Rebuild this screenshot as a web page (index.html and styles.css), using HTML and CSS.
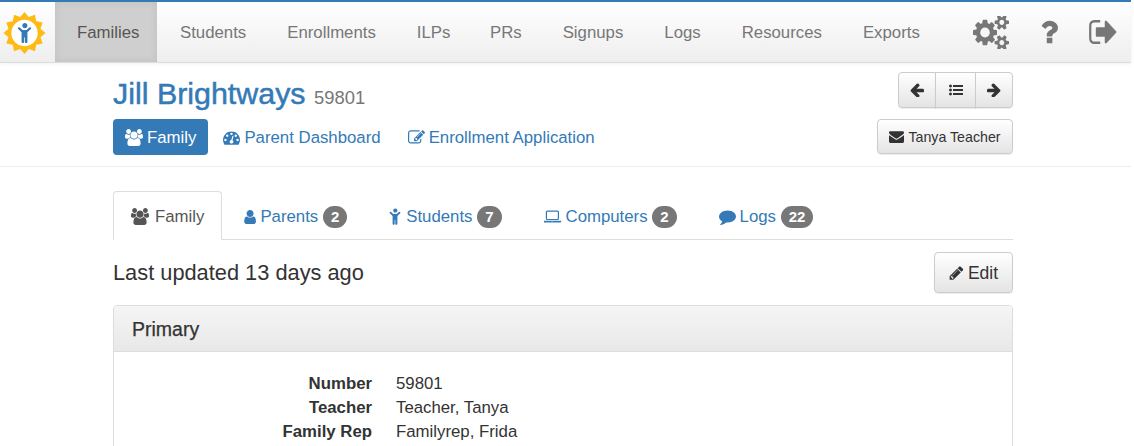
FILE: index.html
```html
<!DOCTYPE html>
<html lang="en">
<head>
<meta charset="utf-8">
<title>Jill Brightways</title>
<link rel="stylesheet" href="styles.css">
</head>
<body>
<svg class="defs" xmlns="http://www.w3.org/2000/svg">
  <symbol id="i-users" viewBox="0 0 1920 1792"><path d="M593 896q-162 5-265 128h-134q-82 0-138-40.500t-56-118.500q0-353 124-353 6 0 43.500 21t97.500 42.500 119 21.500q67 0 133-23-5 37-5 66 0 139 81 256zm1071 637q0 120-73 189.500t-194 69.500h-874q-121 0-194-69.500t-73-189.500q0-53 3.500-103.500t14-109 26.500-108.500 43-97.500 62-81 85.500-53.500 111.500-20q10 0 43 21.500t73 48 107 48 135 21.500 135-21.500 107-48 73-48 43-21.500q61 0 111.500 20t85.500 53.500 62 81 43 97.500 26.500 108.500 14 109 3.500 103.500zm-1024-1277q0 106-75 181t-181 75-181-75-75-181 75-181 181-75 181 75 75 181zm704 384q0 159-112.500 271.500t-271.500 112.500-271.500-112.500-112.500-271.500 112.500-271.500 271.500-112.500 271.500 112.500 112.500 271.500zm576 225q0 78-56 118.500t-138 40.500h-134q-103-123-265-128 81-117 81-256 0-29-5-66 66 23 133 23 59 0 119-21.500t97.500-42.500 43.500-21q124 0 124 353zm-128-609q0 106-75 181t-181 75-181-75-75-181 75-181 181-75 181 75 75 181z"/></symbol>
  <symbol id="i-user" viewBox="128 128 1408 1536"><path d="M1536 1399q0 109-62.500 187t-150.500 78h-854q-88 0-150.500-78t-62.500-187q0-85 8.500-160.500t31.500-152 58.500-131 94-89 134.500-34.500q131 128 313 128t313-128q76 0 134.500 34.500t94 89 58.500 131 31.500 152 8.500 160.500zm-256-887q0 159-112.500 271.500t-271.500 112.500-271.500-112.500-112.500-271.500 112.500-271.500 271.500-112.500 271.500 112.500 112.500 271.500z"/></symbol>
  <symbol id="i-child" viewBox="0 0 1280 1792"><path d="M1188 548l-292 292v824q0 46-33 79t-79 33-79-33-33-79v-384h-64v384q0 46-33 79t-79 33-79-33-33-79v-824l-292-292q-28-28-28-68t28-68q29-28 68.500-28t67.500 28l228 228h368l228-228q28-28 68-28t68 28q28 29 28 68.500t-28 67.500zm-292-292q0 93-65.500 158.500t-158.500 65.500-158.500-65.500-65.500-158.500 65.500-158.500 158.500-65.500 158.500 65.500 65.500 158.500z"/></symbol>
  <symbol id="i-laptop" viewBox="0 0 1920 1792"><path d="M352 1280q-66 0-113-47t-47-113v-704q0-66 47-113t113-47h1088q66 0 113 47t47 113v704q0 66-47 113t-113 47h-1088zm-32-864v704q0 13 9.500 22.500t22.500 9.500h1088q13 0 22.500-9.500t9.500-22.500v-704q0-13-9.500-22.500t-22.500-9.500h-1088q-13 0-22.500 9.500t-9.500 22.500zm1360 928h160v96q0 40-47 68t-113 28h-1600q-66 0-113-28t-47-68v-96h1760zm-720 96q16 0 16-16t-16-16h-160q-16 0-16 16t16 16h160z"/></symbol>
  <symbol id="i-comment" viewBox="0 0 1792 1792"><path d="M1792 896q0 174-120 321.500t-326 233-450 85.500q-70 0-145-8-198 175-460 242-49 14-114 22-17 2-30.500-9t-17.500-29v-1q-3-4-.5-12t2-10 4.500-9.500l6-9 7-8.500 8-9q7-8 31-34.500t34.500-38 31-39.500 32.500-51 27-59 26-76q-157-89-247.500-220t-90.500-281q0-130 71-248.500t191-204.500 286-136.500 348-50.500q244 0 450 85.500t326 233 120 321.500z"/></symbol>
  <symbol id="i-pencil" viewBox="0 0 1536 1792"><path d="M363 1536l91-91-235-235-91 91v107h128v128h107zm523-928q0-22-22-22-10 0-17 7l-542 542q-7 7-7 17 0 22 22 22 10 0 17-7l542-542q7-7 7-17zm-54-192l416 416-832 832h-416v-416zm683 96q0 53-37 90l-166 166-416-416 166-165q36-38 90-38 53 0 91 38l235 234q37 39 37 91z"/></symbol>
  <symbol id="i-edit" viewBox="0 0 1792 1792"><path d="M888 1184l116-116-152-152-116 116v56h96v96h56zm440-720q-16-16-33 1l-350 350q-17 17-1 33t33-1l350-350q17-17 1-33zm80 594v190q0 119-84.500 203.500t-203.500 84.500h-832q-119 0-203.500-84.500t-84.500-203.500v-832q0-119 84.500-203.500t203.500-84.500h832q63 0 117 25 15 7 18 23 3 17-9 29l-49 49q-14 14-32 8-23-6-45-6h-832q-66 0-113 47t-47 113v832q0 66 47 113t113 47h832q66 0 113-47t47-113v-126q0-13 9-22l64-64q15-15 35-7t20 29zm-96-738l288 288-672 672h-288v-288zm444 132l-92 92-288-288 92-92q28-28 68-28t68 28l152 152q28 28 28 68t-28 68z"/></symbol>
  <symbol id="i-dash" viewBox="0 0 1792 1792"><path d="M384 1152q0-53-37.500-90.500t-90.500-37.500-90.500 37.500-37.500 90.500 37.500 90.500 90.500 37.500 90.500-37.500 37.500-90.500zm192-448q0-53-37.500-90.500t-90.500-37.500-90.500 37.500-37.500 90.500 37.500 90.500 90.500 37.500 90.500-37.500 37.500-90.500zm428 481l101-382q6-26-7.500-48.500t-38.500-29.500-48 6.500-30 39.500l-101 382q-60 5-107 43.500t-63 98.500q-20 77 20 146t117 89 146-20 89-117q16-60-6-117t-72-91zm660-33q0-53-37.500-90.500t-90.500-37.500-90.500 37.500-37.500 90.500 37.500 90.500 90.500 37.500 90.500-37.500 37.500-90.500zm-640-640q0-53-37.500-90.500t-90.500-37.500-90.500 37.500-37.500 90.500 37.500 90.500 90.500 37.500 90.500-37.500 37.500-90.500zm448 192q0-53-37.500-90.500t-90.500-37.500-90.500 37.500-37.500 90.500 37.500 90.500 90.500 37.500 90.500-37.500 37.500-90.500zm320 448q0 261-141 483-19 29-54 29h-1402q-35 0-54-29-141-221-141-483 0-182 71-348t191-286 286-191 348-71 348 71 286 191 191 286 71 348z" fill-rule="evenodd"/></symbol>
  <symbol id="i-envelope" viewBox="0 0 1792 1792"><path d="M1792 710v794q0 66-47 113t-113 47h-1472q-66 0-113-47t-47-113v-794q44 49 101 87 362 246 497 345 57 42 92.500 65.500t94.500 48 110 24.500h2q51 0 110-24.500t94.500-48 92.500-65.500q170-123 498-345 57-39 100-87zm0-294q0 79-49 151t-122 123q-376 261-468 325-10 7-42.500 30.500t-54 38-52 32.500-57.500 27-50 9h-2q-23 0-50-9t-57.500-27-52-32.500-54-38-42.500-30.500q-91-64-262-182.500t-205-142.500q-62-42-117-115.500t-55-136.500q0-78 41.500-130t118.500-52h1472q65 0 112.500 47t47.500 113z"/></symbol>
  <symbol id="i-left" viewBox="128 128 1536 1536"><path d="M1664 896v128q0 53-32.500 90.500t-84.500 37.500h-704l293 294q38 36 38 90t-38 90l-75 76q-38 38-90 38-53 0-91-38l-651-652q-37-37-37-90 0-52 37-91l651-650q38-38 91-38 52 0 90 38l75 74q38 38 38 91t-38 91l-293 293h704q52 0 84.500 37.500t32.500 90.500z"/></symbol>
  <symbol id="i-right" viewBox="128 128 1536 1536"><path d="M1600 960q0 54-37 91l-651 651q-39 37-91 37-51 0-90-37l-75-75q-38-38-38-91t38-91l293-293h-704q-52 0-84.500-37.500t-32.500-90.500v-128q0-53 32.500-90.500t84.500-37.500h704l-293-294q-38-36-38-90t38-90l75-75q38-38 90-38t91 38l651 651q37 35 37 90z"/></symbol>
  <symbol id="i-list" viewBox="0 0 1792 1792"><path d="M384 1408q0 80-56 136t-136 56-136-56-56-136 56-136 136-56 136 56 56 136zm0-512q0 80-56 136t-136 56-136-56-56-136 56-136 136-56 136 56 56 136zm1408 416v192q0 13-9.500 22.500t-22.500 9.500h-1216q-13 0-22.500-9.500t-9.500-22.500v-192q0-13 9.500-22.500t22.500-9.500h1216q13 0 22.500 9.500t9.500 22.500zm-1408-928q0 80-56 136t-136 56-136-56-56-136 56-136 136-56 136 56 56 136zm1408 416v192q0 13-9.500 22.500t-22.500 9.500h-1216q-13 0-22.500-9.500t-9.500-22.500v-192q0-13 9.500-22.500t22.500-9.500h1216q13 0 22.500 9.500t9.500 22.500zm0-512v192q0 13-9.500 22.500t-22.500 9.500h-1216q-13 0-22.500-9.500t-9.500-22.500v-192q0-13 9.500-22.500t22.500-9.500h1216q13 0 22.500 9.500t9.500 22.500z"/></symbol>
  <symbol id="i-cogs" viewBox="0 64 1920 1664" preserveAspectRatio="none"><path d="M896 896q0-106-75-181t-181-75-181 75-75 181 75 181 181 75 181-75 75-181zm768 512q0-52-38-90t-90-38-90 38-38 90q0 53 37.500 90.500t90.500 37.500 90.500-37.500 37.500-90.500zm0-1024q0-52-38-90t-90-38-90 38-38 90q0 53 37.500 90.500t90.500 37.500 90.500-37.500 37.500-90.500zm-384 421v185q0 10-7 19.500t-16 10.500l-155 24q-11 35-32 76 34 48 90 115 7 11 7 20 0 12-7 19-23 30-82.500 89.500t-78.500 59.500q-11 0-21-7l-115-90q-37 19-77 31-11 108-23 155-7 24-30 24h-186q-11 0-20-7.500t-10-17.500l-23-153q-34-10-75-31l-118 89q-7 7-20 7-11 0-21-8-144-133-144-160 0-9 7-19 10-14 41-53t47-61q-23-44-35-82l-152-24q-10-1-17-9.500t-7-19.500v-185q0-10 7-19.500t16-10.500l155-24q11-35 32-76-34-48-90-115-7-11-7-20 0-12 7-20 22-30 82-89t79-59q11 0 21 7l115 90q34-18 77-32 11-108 23-154 7-24 30-24h186q11 0 20 7.500t10 17.500l23 153q34 10 75 31l118-89q8-7 20-7 11 0 21 8 144 133 144 160 0 8-7 19-12 16-42 54t-45 60q23 48 34 82l152 23q10 2 17 10.500t7 19.500zm640 533v140q0 16-149 31-12 27-30 52 51 113 51 138 0 4-4 7-122 71-124 71-8 0-46-47t-52-68q-20 2-30 2t-30-2q-14 21-52 68t-46 47q-2 0-124-71-4-3-4-7 0-25 51-138-18-25-30-52-149-15-149-31v-140q0-16 149-31 13-29 30-52-51-113-51-138 0-4 4-7 4-2 35-20t59-34 30-16q8 0 46 46.500t52 67.500q20-2 30-2t30 2q51-71 92-112l6-2q4 0 124 70 4 3 4 7 0 25-51 138 17 23 30 52 149 15 149 31zm0-1024v140q0 16-149 31-12 27-30 52 51 113 51 138 0 4-4 7-122 71-124 71-8 0-46-47t-52-68q-20 2-30 2t-30-2q-14 21-52 68t-46 47q-2 0-124-71-4-3-4-7 0-25 51-138-18-25-30-52-149-15-149-31v-140q0-16 149-31 13-29 30-52-51-113-51-138 0-4 4-7 4-2 35-20t59-34 30-16q8 0 46 46.500t52 67.500q20-2 30-2t30 2q51-71 92-112l6-2q4 0 124 70 4 3 4 7 0 25-51 138 17 23 30 52 149 15 149 31z"/></symbol>
  <symbol id="i-question" viewBox="384 256 1024 1280"><path d="M1088 1256v240q0 16-12 28t-28 12h-240q-16 0-28-12t-12-28v-240q0-16 12-28t28-12h240q16 0 28 12t12 28zm316-600q0 54-15.500 101t-35 76.500-55 59.500-57.500 43.500-61 35.500q-41 23-68.500 65t-27.500 67q0 17-12 32.500t-28 15.500h-240q-15 0-25.500-18.500t-10.500-37.500v-45q0-83 65-156.500t143-108.500q59-27 84-56t25-76q0-42-46.500-74t-107.500-32q-65 0-108 29-35 25-107 115-13 16-31 16-12 0-25-8l-164-125q-13-10-15.500-25t5.500-28q160-266 464-266 80 0 161 31t146 83 106 127.500 41 158.500z"/></symbol>
  <symbol id="i-signout" viewBox="0 256 1664 1280" preserveAspectRatio="none"><path d="M704 1440q0 4 1 20t.5 26.500-3 23.500-10 19.500-20.500 6.500h-320q-119 0-203.500-84.500t-84.500-203.500v-704q0-119 84.500-203.500t203.500-84.500h320q13 0 22.500 9.500t9.500 22.500q0 4 1 20t.5 26.500-3 23.500-10 19.500-20.500 6.500h-320q-66 0-113 47t-47 113v704q0 66 47 113t113 47h312l11.500 1 11.500 3 8 5.500 7 9 2 13.500zm928-544q0 26-19 45l-544 544q-19 19-45 19t-45-19-19-45v-288h-448q-26 0-45-19t-19-45v-384q0-26 19-45t45-19h448v-288q0-26 19-45t45-19 45 19l544 544q19 19 19 45z"/></symbol>
</svg>

<div class="app">
  <nav class="navbar">
    <a class="brand" href="#">
      <svg class="sun" viewBox="-22 -22 44 44">
        <polygon class="sun-rays" points="0,-21.500 4.400,-16.400 10.700,-18.600 12,-12 18.600,-10.700 16.400,-4.400 21.500,0 16.400,4.400 18.600,10.700 12,12 10.700,18.600 4.400,16.400 0,21.500 -4.400,16.400 -10.700,18.600 -12,12 -18.600,10.700 -16.400,4.400 -21.500,0 -16.400,-4.400 -18.600,-10.700 -12,-12 -10.700,-18.600 -4.400,-16.400"/>
        <circle class="sun-core" r="13.500"/>
        <use class="sun-child" href="#i-child" x="-7.500" y="-10.500" width="15" height="21"/>
      </svg>
    </a>
    <ul class="nav-links">
      <li><a class="nav-link active" href="#">Families</a></li>
      <li><a class="nav-link" href="#">Students</a></li>
      <li><a class="nav-link" href="#">Enrollments</a></li>
      <li><a class="nav-link" href="#">ILPs</a></li>
      <li><a class="nav-link" href="#">PRs</a></li>
      <li><a class="nav-link" href="#">Signups</a></li>
      <li><a class="nav-link" href="#">Logs</a></li>
      <li><a class="nav-link" href="#">Resources</a></li>
      <li><a class="nav-link" href="#">Exports</a></li>
    </ul>
    <div class="nav-tools">
      <svg class="tool tool-cogs"><use href="#i-cogs"/></svg>
      <svg class="tool tool-question"><use href="#i-question"/></svg>
      <svg class="tool tool-signout"><use href="#i-signout"/></svg>
    </div>
  </nav>

  <header class="page-head">
    <div class="container head-row">
      <div class="head-main">
        <h1 class="title"><a href="#">Jill Brightways</a> <small>59801</small></h1>
        <ul class="pills">
          <li><a class="pill active" href="#"><svg class="ico ico-users"><use href="#i-users"/></svg>Family</a></li>
          <li><a class="pill" href="#"><svg class="ico ico-dash"><use href="#i-dash"/></svg>Parent Dashboard</a></li>
          <li><a class="pill" href="#"><svg class="ico ico-edit"><use href="#i-edit"/></svg>Enrollment Application</a></li>
        </ul>
      </div>
      <div class="head-actions">
        <div class="btn-group">
          <a class="btn pager" href="#"><svg class="ico-sm"><use href="#i-left"/></svg></a>
          <a class="btn pager" href="#"><svg class="ico-sm"><use href="#i-list"/></svg></a>
          <a class="btn pager" href="#"><svg class="ico-sm"><use href="#i-right"/></svg></a>
        </div>
        <a class="btn btn-teacher" href="#"><svg class="ico-mail"><use href="#i-envelope"/></svg>Tanya Teacher</a>
      </div>
    </div>
  </header>

  <main class="container content">
    <ul class="tabs">
      <li><a class="tab active" href="#"><svg class="ico ico-users"><use href="#i-users"/></svg>Family</a></li>
      <li><a class="tab" href="#"><svg class="ico ico-user"><use href="#i-user"/></svg>Parents <span class="badge">2</span></a></li>
      <li><a class="tab" href="#"><svg class="ico ico-child"><use href="#i-child"/></svg>Students <span class="badge">7</span></a></li>
      <li><a class="tab" href="#"><svg class="ico ico-laptop"><use href="#i-laptop"/></svg>Computers <span class="badge">2</span></a></li>
      <li><a class="tab" href="#"><svg class="ico ico-comment"><use href="#i-comment"/></svg>Logs <span class="badge">22</span></a></li>
    </ul>

    <div class="status-row">
      <p class="updated">Last updated 13 days ago</p>
      <a class="btn btn-edit" href="#"><svg class="ico-pencil"><use href="#i-pencil"/></svg>Edit</a>
    </div>

    <section class="panel">
      <h2 class="panel-title">Primary</h2>
      <dl class="facts">
        <dt>Number</dt><dd>59801</dd>
        <dt>Teacher</dt><dd>Teacher, Tanya</dd>
        <dt>Family Rep</dt><dd>Familyrep, Frida</dd>
      </dl>
    </section>
  </main>
</div>
</body>
</html>
```
FILE: styles.css
```css
* { box-sizing: border-box; }
html, body { height: 100%; }
body {
  margin: 0;
  overflow: hidden;
  background: #fff;
  color: #333;
  font-family: "Liberation Sans", Arial, sans-serif;
  font-size: 16.8px;
  line-height: 24px;
}
a { text-decoration: none; color: #337ab7; }
ul { list-style: none; margin: 0; padding: 0; }
svg { fill: currentColor; }
.defs { display: none; }
.app { width: 1131px; }
.container { width: 900px; margin-left: 113px; }

/* navbar */
.navbar {
  display: flex;
  height: 63px;
  border-top: 2px solid #337ab7;
  border-bottom: 1px solid #dcdcdc;
  background: linear-gradient(#fff, #eeeeee);
  box-shadow: 0 1px 4px rgba(0,0,0,.06);
}
.brand { display: flex; align-items: center; width: 55px; padding-left: 3px; }
.sun { width: 43px; height: 44px; margin-top: 1px; }
.sun-rays { fill: #fdbb14; }
.sun-core { fill: #fff; }
.sun-child { fill: #337ab7; }
.nav-links { display: flex; }
.nav-links li:nth-child(2) { margin-left: 1.5px; }
.nav-links li:nth-child(5) { margin-left: -1.5px; }
.nav-link {
  display: block;
  height: 60px;
  padding: 19px 20px 0 21px;
  color: #777;
  font-size: 16.8px;
}
.nav-link.active {
  padding: 19px 18px 0 22px;
  color: #555;
  background: #cfcfcf;
  box-shadow: inset 0 0 8px rgba(0,0,0,.08);
}
.nav-tools { display: flex; align-items: center; margin-left: auto; }
.tool { color: #777; display: block; }
.tool-cogs { width: 36px; height: 33px; margin-right: 31px; }
.tool-question { width: 18px; height: 24px; margin-right: 30px; }
.tool-signout { width: 29px; height: 24px; margin-right: 14px; }

/* page head */
.page-head { height: 104px; border-bottom: 1px solid #eee; }
.head-row { display: flex; justify-content: space-between; }
.title {
  margin: 0;
  padding-top: 11px;
  height: 56px;
  font-size: 30.4px;
  line-height: 38px;
  font-weight: 400;
  -webkit-text-stroke: .5px #337ab7;
}
.title small { font-size: 18.4px; color: #777; -webkit-text-stroke: 0; }
.pills { display: flex; }
.pill {
  display: flex;
  align-items: center;
  height: 36px;
  padding: 1px 12px 0;
  margin-right: 3px;
  border-radius: 4px;
}
.pill.active { background: #337ab7; color: #fff; }
.ico { display: inline-block; margin-right: 4px; flex: none; }
.ico-users { width: 18px; height: 17px; }
.ico-dash { width: 17px; height: 17px; }
.ico-edit { width: 17px; height: 17px; }
.ico-user { width: 13px; height: 14px; }
.ico-child { width: 12px; height: 17px; margin-right: 5px; }
.ico-laptop { width: 18px; height: 17px; }
.ico-comment { width: 17px; height: 17px; }

.head-actions {
  display: flex;
  flex-direction: column;
  align-items: flex-end;
  padding-top: 9px;
  gap: 11px;
}
.btn {
  display: flex;
  align-items: center;
  justify-content: center;
  border: 1px solid #ccc;
  border-radius: 4px;
  color: #333;
  background: linear-gradient(#fff, #e4e4e4);
  box-shadow: inset 0 1px 0 rgba(255,255,255,.15), 0 1px 1px rgba(0,0,0,.075);
}
.btn-group { display: flex; }
.pager { width: 41px; height: 36px; border-radius: 0; margin-left: -1px; color: #333; }
.pager:first-child { width: 38px; margin-left: 0; border-radius: 4px 0 0 4px; }
.pager:last-child { width: 38px; border-radius: 0 4px 4px 0; }
.ico-sm { width: 14px; height: 14px; }
.btn-teacher { width: 136px; height: 35px; font-size: 14.2px; }
.ico-mail { width: 15px; height: 15px; margin-right: 4px; }

/* tabs */
.content { padding-top: 24px; }
.tabs { display: flex; height: 49px; border-bottom: 1px solid #ddd; }
.tab {
  display: flex;
  align-items: center;
  height: 49px;
  padding: 2px 20px 0;
  border: 1px solid transparent;
  border-radius: 4px 4px 0 0;
  white-space: pre;
}
.tab.active {
  padding-left: 17px;
  padding-right: 17px;
  color: #555;
  background: #fff;
  border-color: #ddd #ddd #fff;
}
.tab.active .ico { margin-right: 6px; }
.badge {
  display: inline-block;
  min-width: 10px;
  padding: 3px 8px;
  border-radius: 11px;
  background: #777;
  color: #fff;
  font-size: 15px;
  font-weight: 700;
  line-height: 16px;
  text-align: center;
}

/* status */
.status-row {
  display: flex;
  justify-content: space-between;
  align-items: flex-start;
  padding-top: 12px;
}
.updated { margin: 0; font-size: 21.8px; line-height: 42px; }
.btn-edit { width: 79px; height: 41px; font-size: 17.5px; }
.ico-pencil { width: 15px; height: 16px; margin-right: 4px; }

/* panel */
.panel {
  margin-top: 11px;
  border: 1px solid #ddd;
  border-radius: 4px;
  padding-bottom: 40px;
  box-shadow: 0 1px 1px rgba(0,0,0,.05);
}
.panel-title {
  margin: 0;
  height: 46px;
  padding: 0 19px 0 18px;
  border-bottom: 1px solid #ddd;
  background: linear-gradient(#f5f5f5, #e8e8e8);
  font-size: 19.5px;
  line-height: 46px;
  font-weight: 400;
  -webkit-text-stroke: .25px #333;
  border-radius: 3px 3px 0 0;
}
.facts {
  display: grid;
  grid-template-columns: 258px 1fr;
  column-gap: 24px;
  margin: 20px 0 0;
}
.facts dt { font-weight: 700; text-align: right; }
.facts dd { margin: 0; }
```
